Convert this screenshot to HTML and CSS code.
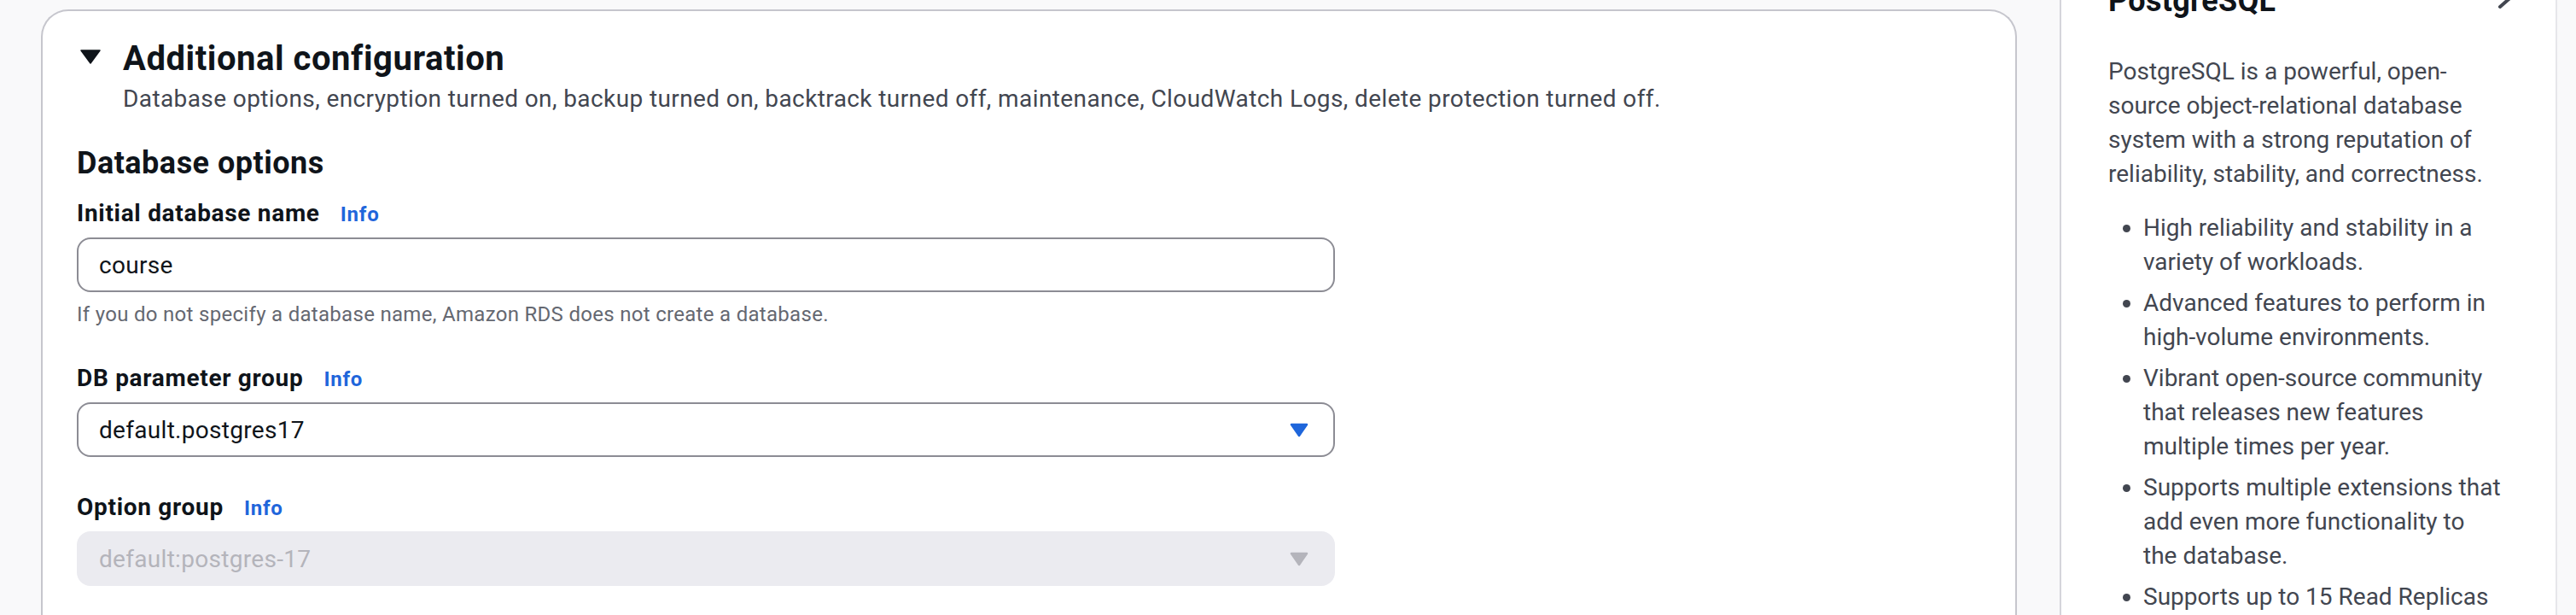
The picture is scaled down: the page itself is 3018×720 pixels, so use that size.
FILE: index.html
```html
<!DOCTYPE html>
<html lang="en">
<head>
<meta charset="utf-8">
<title>Additional configuration</title>
<link rel="stylesheet" href="styles.css">
</head>
<body>
<div class="layout">
  <main class="main">
    <section class="card">
      <header class="exp-header">
        <svg class="caret" viewBox="0 0 24 17" aria-hidden="true"><polygon points="1,1 23,1 12,16" fill="#0f141a" stroke="#0f141a" stroke-width="1.5" stroke-linejoin="round"/></svg>
        <div class="exp-titles">
          <h2 class="exp-title">Additional configuration</h2>
          <p class="exp-desc">Database options, encryption turned on, backup turned on, backtrack turned off, maintenance, CloudWatch Logs, delete protection turned off.</p>
        </div>
      </header>
      <div class="card-body">
        <h3 class="section-title">Database options</h3>

        <div class="field field-first">
          <div class="label-row"><span class="label">Initial database name</span><a class="info">Info</a></div>
          <div class="input">course</div>
          <p class="hint">If you do not specify a database name, Amazon RDS does not create a database.</p>
        </div>

        <div class="field">
          <div class="label-row"><span class="label">DB parameter group</span><a class="info">Info</a></div>
          <div class="input select">
            <span>default.postgres17</span>
            <svg class="sel-caret" viewBox="0 0 22 17" aria-hidden="true"><polygon points="2,2 20,2 11,15" fill="#1f66db" stroke="#1f66db" stroke-width="2.5" stroke-linejoin="round"/></svg>
          </div>
        </div>

        <div class="field">
          <div class="label-row"><span class="label">Option group</span><a class="info">Info</a></div>
          <div class="input select disabled">
            <span>default:postgres-17</span>
            <svg class="sel-caret" viewBox="0 0 22 17" aria-hidden="true"><polygon points="2,2 20,2 11,15" fill="#b4b4bb" stroke="#b4b4bb" stroke-width="2.5" stroke-linejoin="round"/></svg>
          </div>
        </div>
      </div>
    </section>
  </main>

  <aside class="panel">
    <div class="panel-head">
      <h2 class="panel-title">PostgreSQL</h2>
      <svg class="chev" viewBox="0 0 24 36" aria-hidden="true"><path d="M4 4 L20 18 L4 32" fill="none" stroke="#424650" stroke-width="4" stroke-linecap="round" stroke-linejoin="round"/></svg>
    </div>
    <p class="panel-text">PostgreSQL is a powerful, open-<br>source object-relational database<br>system with a strong reputation of<br>reliability, stability, and correctness.</p>
    <ul class="panel-list">
      <li>High reliability and stability in a<br>variety of workloads.</li>
      <li>Advanced features to perform in<br>high-volume environments.</li>
      <li>Vibrant open-source community<br>that releases new features<br>multiple times per year.</li>
      <li>Supports multiple extensions that<br>add even more functionality to<br>the database.</li>
      <li>Supports up to 15 Read Replicas</li>
    </ul>
  </aside>
</div>
</body>
</html>
```

FILE: styles.css
```css
html, body {
  margin: 0;
  padding: 0;
  background: #f9f9fa;
  font-family: Roboto, "Open Sans", "Liberation Sans", sans-serif;
  color: #0f141a;
}

.layout {
  display: flex;
  gap: 50px;
  height: 720px;
  overflow: hidden;
}

.main {
  flex: none;
  width: 2315px;
  padding: 11px 0 0 48px;
}

.card {
  background: #ffffff;
  border: 2px solid #c6c6cd;
  border-bottom: none;
  border-radius: 32px 32px 0 0;
  height: 760px;
}

.exp-header {
  display: flex;
  align-items: flex-start;
  padding: 32px 0 0 44px;
}

.caret {
  flex: none;
  width: 24px;
  height: 17px;
  margin: 13px 26px 0 0;
}

.exp-title {
  margin: 0;
  font-size: 40px;
  line-height: 48px;
  font-weight: 700;
  letter-spacing: 0.55px;
  color: #0f141a;
}

.exp-desc {
  margin: 3px 0 0;
  font-size: 28px;
  line-height: 40px;
  letter-spacing: 0.4px;
  color: #424650;
}

.card-body {
  padding: 0 40px;
}

.section-title {
  margin: 33px 0 0;
  font-size: 36px;
  line-height: 44px;
  font-weight: 700;
  letter-spacing: 0.5px;
}

.field {
  margin-top: 39px;
}

.field-first {
  margin-top: 17px;
}

.label-row {
  display: flex;
  align-items: baseline;
  gap: 24px;
}

.label {
  font-size: 28px;
  line-height: 40px;
  font-weight: 700;
  letter-spacing: 0.7px;
  color: #0f141a;
}

.info {
  font-size: 24px;
  font-weight: 700;
  letter-spacing: 0.8px;
  color: #1f66db;
}

.input {
  box-sizing: border-box;
  width: 1474px;
  height: 64px;
  margin-top: 8px;
  border: 2px solid #8c8c94;
  border-radius: 16px;
  display: flex;
  align-items: center;
  justify-content: space-between;
  padding: 0 29px 0 24px;
  font-size: 28px;
  letter-spacing: 0.3px;
  color: #0f141a;
  background: #ffffff;
}

.select.disabled {
  background: #ebebf0;
  border-color: #ebebf0;
  color: #b4b4bb;
}

.sel-caret {
  flex: none;
  width: 22px;
  height: 17px;
}

.hint {
  margin: 10px 0 0;
  font-size: 24px;
  line-height: 32px;
  letter-spacing: 0.3px;
  color: #656871;
}

.panel {
  flex: none;
  box-sizing: border-box;
  width: 583px;
  background: #ffffff;
  border-left: 2px solid #d5d5db;
  border-right: 2px solid #e6e6ea;
  padding: 0 45px 0 55px;
  color: #424650;
}

.panel-head {
  display: flex;
  justify-content: space-between;
  align-items: flex-start;
  margin-top: -21px;
}

.panel-title {
  margin: 0;
  font-size: 36px;
  line-height: 44px;
  font-weight: 700;
  letter-spacing: 0.3px;
  color: #0f141a;
}

.chev {
  flex: none;
  width: 24px;
  height: 36px;
  margin-top: -3px;
}

.panel-text {
  margin: 41px 0 0;
  font-size: 28px;
  line-height: 40px;
}

.panel-list {
  margin: 23px 0 0;
  padding-left: 41px;
  font-size: 28px;
  line-height: 40px;
}

.panel-list li + li {
  margin-top: 8px;
}
```
